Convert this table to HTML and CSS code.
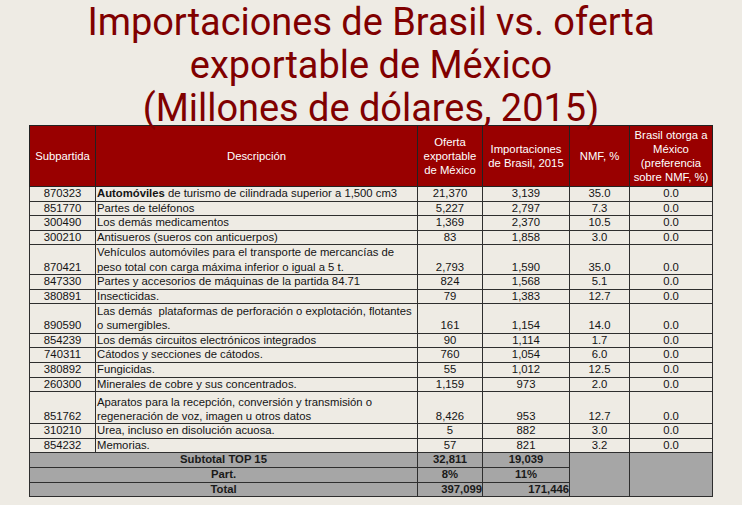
FILE: index.html
```html
<!DOCTYPE html>
<html lang="es">
<head>
<meta charset="utf-8">
<title>Importaciones de Brasil vs. oferta exportable de México</title>
<link rel="stylesheet" href="styles.css">
</head>
<body>
<div class="slide">
  <h1 class="title">
    <span class="tline">Importaciones de Brasil vs. oferta</span>
    <span class="tline">exportable de México</span>
    <span class="tline">(Millones de dólares, 2015)</span>
  </h1>
  <table class="data">
    <colgroup>
      <col class="c1"><col class="c2"><col class="c3"><col class="c4"><col class="c5"><col class="c6">
    </colgroup>
    <thead>
      <tr>
        <th>Subpartida</th>
        <th>Descripción</th>
        <th>Oferta exportable de México</th>
        <th>Importaciones de Brasil, 2015</th>
        <th>NMF, %</th>
        <th>Brasil otorga a México (preferencia sobre NMF, %)</th>
      </tr>
    </thead>
    <tbody>
      <tr><td class="code">870323</td><td class="desc"><b>Automóviles</b> de turismo de cilindrada superior a 1,500 cm3</td><td class="num">21,370</td><td class="num">3,139</td><td class="num">35.0</td><td class="num">0.0</td></tr>
      <tr><td class="code">851770</td><td class="desc">Partes de teléfonos</td><td class="num">5,227</td><td class="num">2,797</td><td class="num">7.3</td><td class="num">0.0</td></tr>
      <tr><td class="code">300490</td><td class="desc">Los demás medicamentos</td><td class="num">1,369</td><td class="num">2,370</td><td class="num">10.5</td><td class="num">0.0</td></tr>
      <tr><td class="code">300210</td><td class="desc">Antisueros (sueros con anticuerpos)</td><td class="num">83</td><td class="num">1,858</td><td class="num">3.0</td><td class="num">0.0</td></tr>
      <tr class="two"><td class="code">870421</td><td class="desc">Vehículos automóviles para el transporte de mercancías de<br>peso total con carga máxima inferior o igual a 5 t.</td><td class="num">2,793</td><td class="num">1,590</td><td class="num">35.0</td><td class="num">0.0</td></tr>
      <tr><td class="code">847330</td><td class="desc">Partes y accesorios de máquinas de la partida 84.71</td><td class="num">824</td><td class="num">1,568</td><td class="num">5.1</td><td class="num">0.0</td></tr>
      <tr><td class="code">380891</td><td class="desc">Insecticidas.</td><td class="num">79</td><td class="num">1,383</td><td class="num">12.7</td><td class="num">0.0</td></tr>
      <tr class="two"><td class="code">890590</td><td class="desc">Las demás&nbsp; plataformas de perforación o explotación, flotantes<br>o sumergibles.</td><td class="num">161</td><td class="num">1,154</td><td class="num">14.0</td><td class="num">0.0</td></tr>
      <tr><td class="code">854239</td><td class="desc">Los demás circuitos electrónicos integrados</td><td class="num">90</td><td class="num">1,114</td><td class="num">1.7</td><td class="num">0.0</td></tr>
      <tr><td class="code">740311</td><td class="desc">Cátodos y secciones de cátodos.</td><td class="num">760</td><td class="num">1,054</td><td class="num">6.0</td><td class="num">0.0</td></tr>
      <tr><td class="code">380892</td><td class="desc">Fungicidas.</td><td class="num">55</td><td class="num">1,012</td><td class="num">12.5</td><td class="num">0.0</td></tr>
      <tr><td class="code">260300</td><td class="desc">Minerales de cobre y sus concentrados.</td><td class="num">1,159</td><td class="num">973</td><td class="num">2.0</td><td class="num">0.0</td></tr>
      <tr class="tall"><td class="code">851762</td><td class="desc">Aparatos para la recepción, conversión y transmisión o<br>regeneración de voz, imagen u otros datos</td><td class="num">8,426</td><td class="num">953</td><td class="num">12.7</td><td class="num">0.0</td></tr>
      <tr><td class="code">310210</td><td class="desc">Urea, incluso en disolución acuosa.</td><td class="num">5</td><td class="num">882</td><td class="num">3.0</td><td class="num">0.0</td></tr>
      <tr><td class="code">854232</td><td class="desc">Memorias.</td><td class="num">57</td><td class="num">821</td><td class="num">3.2</td><td class="num">0.0</td></tr>
    </tbody>
    <tfoot>
      <tr><td class="lbl" colspan="2">Subtotal TOP 15</td><td class="num">32,811</td><td class="num">19,039</td><td class="blank" rowspan="3"></td><td class="blank" rowspan="3"></td></tr>
      <tr><td class="lbl" colspan="2">Part.</td><td class="num">8%</td><td class="num">11%</td></tr>
      <tr><td class="lbl" colspan="2">Total</td><td class="num right">397,099</td><td class="num right">171,446</td></tr>
    </tfoot>
  </table>
</div>
</body>
</html>
```

FILE: styles.css
```css
html, body {
  margin: 0;
  padding: 0;
  background: #eeebe4;
}

.slide {
  width: 742px;
  height: 505px;
  overflow: hidden;
}

.title {
  margin: 0;
  height: 125px;
  display: flex;
  flex-direction: column;
  align-items: center;
  font-family: Roboto, "Liberation Sans", sans-serif;
  font-weight: 400;
  font-size: 38.7px;
  line-height: 43px;
  color: #800000;
  white-space: nowrap;
  transform: scaleX(0.98);
  transform-origin: 371px 0;
}

.tline {
  display: block;
}

.data {
  margin-left: 29px;
  width: 683px;
  table-layout: fixed;
  border-collapse: collapse;
  border: 1.5px solid #2a2a2a;
  font-family: "Liberation Sans", Arial, sans-serif;
  font-size: 11.3px;
  color: #141414;
}

.c1 { width: 66px; }
.c2 { width: 322px; }
.c3 { width: 65px; }
.c4 { width: 87px; }
.c5 { width: 60px; }
.c6 { width: 83px; }

.data th {
  background: #990000;
  color: #ffffff;
  font-weight: 400;
  height: 60px;
  line-height: 14.2px;
  padding: 0 2px;
  border: 1px solid #222;
  vertical-align: middle;
  text-align: center;
}

.data td {
  border: 1px solid #2e2e2e;
  padding: 0;
  line-height: 13.6px;
  height: 13.6px;
  vertical-align: bottom;
  white-space: nowrap;
}

.data tr.two td {
  height: 28.3px;
  line-height: 14.3px;
}

.data tr.tall td {
  height: 31px;
  line-height: 14.3px;
}

.code,
.num {
  text-align: center;
}

.desc {
  text-align: left;
  padding-left: 1px !important;
}

.desc b {
  font-weight: 700;
}

.data tfoot td {
  background: #a6a6a6;
  font-weight: 700;
  color: #1a1a1a;
  vertical-align: middle;
}

.data tfoot .lbl {
  text-align: center;
}

.data tfoot .right {
  text-align: right;
}
```
